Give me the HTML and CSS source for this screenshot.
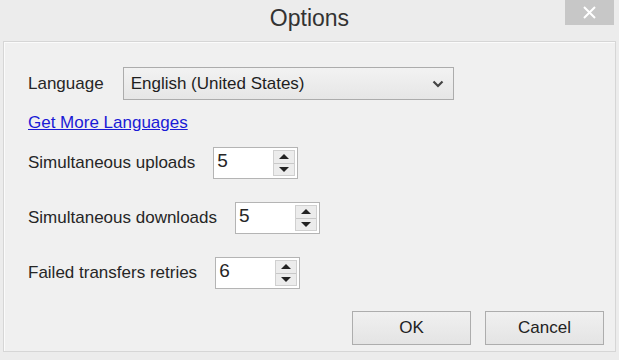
FILE: index.html
```html
<!DOCTYPE html>
<html lang="en">
<head>
    <meta charset="UTF-8">
    <title>Options</title>
    <link rel="stylesheet" href="styles.css">
</head>
<body>
    <div class="dialog">
        <div class="titlebar">
            <span class="title">Options</span>
            <button class="close" aria-label="Close">
                <svg width="15" height="15" viewBox="0 0 15 15"><path d="M2 2 L13 13 M13 2 L2 13" stroke="#fff" stroke-width="2" fill="none"/></svg>
            </button>
        </div>
        <div class="panel">
            <div class="row">
                <label>Language</label>
                <div class="select">
                    <span>English (United States)</span>
                    <svg width="12" height="8" viewBox="0 0 12 8"><path d="M1.5 1.5 L6 6 L10.5 1.5" stroke="#444" stroke-width="2.2" fill="none"/></svg>
                </div>
            </div>
            <a class="link" href="#">Get More Languages</a>
            <div class="row spin-row">
                <label>Simultaneous uploads</label>
                <div class="spin"><span class="val">5</span><span class="arrows"><i class="up"></i><i class="down"></i></span></div>
            </div>
            <div class="row spin-row">
                <label>Simultaneous downloads</label>
                <div class="spin"><span class="val">5</span><span class="arrows"><i class="up"></i><i class="down"></i></span></div>
            </div>
            <div class="row spin-row">
                <label>Failed transfers retries</label>
                <div class="spin"><span class="val">6</span><span class="arrows"><i class="up"></i><i class="down"></i></span></div>
            </div>
            <div class="actions">
                <button class="btn">OK</button>
                <button class="btn">Cancel</button>
            </div>
        </div>
    </div>
</body>
</html>
```
FILE: styles.css
```css
html, body {
    margin: 0;
    padding: 0;
}
body {
    width: 619px;
    height: 360px;
    background-color: #ececec;
    font-family: "Liberation Sans", Arial, sans-serif;
    color: #262626;
    overflow: hidden;
}
.dialog {
    display: flex;
    flex-direction: column;
    height: 360px;
}
.titlebar {
    height: 40px;
    display: flex;
    justify-content: center;
    align-items: center;
    position: relative;
}
.title {
    font-size: 23px;
    color: #333;
    margin-top: -4px;
}
.close {
    position: absolute;
    top: 0;
    right: 5px;
    width: 49px;
    height: 25px;
    border: none;
    background-color: #c7c7c7;
    display: flex;
    justify-content: center;
    align-items: center;
    padding: 0;
}
.panel {
    margin: 1px 3px 8px 3px;
    flex: 1;
    background-color: #f0f0f0;
    border: 1px solid #d6d6d6;
    box-shadow: inset 1px 1px 0 #fbfbfb;
    padding: 25px 0 0 24px;
    display: flex;
    flex-direction: column;
    align-items: flex-start;
    font-size: 17px;
}
.row {
    display: flex;
    align-items: center;
    gap: 19px;
}
.select {
    width: 313px;
    height: 31px;
    border: 1px solid #acacac;
    background: linear-gradient(#f2f2f2, #e6e6e6);
    display: flex;
    align-items: center;
    justify-content: space-between;
    padding: 0 9px 0 7px;
    color: #1e1e1e;
}
.link {
    color: #1a1ad6;
    margin-top: 13px;
    margin-left: 0;
}
.spin-row {
    gap: 18px;
    margin-top: 23px;
}
.link + .spin-row {
    margin-top: 14px;
}
.spin {
    width: 83px;
    height: 30px;
    border: 1px solid #b4b4b4;
    background-color: #fff;
    display: flex;
    justify-content: space-between;
}
.val {
    padding: 2px 0 0 3px;
    font-size: 19px;
}
.arrows {
    width: 20px;
    margin: 2px;
    display: flex;
    flex-direction: column;
    border: 1px solid #d0d0d0;
    background-color: #ececec;
}
.arrows i {
    flex: 1;
    display: flex;
    justify-content: center;
    align-items: center;
}
.arrows .up {
    border-bottom: 1px solid #c8c8c8;
}
.arrows .up::after {
    content: "";
    border-left: 5px solid transparent;
    border-right: 5px solid transparent;
    border-bottom: 5px solid #222;
}
.arrows .down::after {
    content: "";
    border-left: 5px solid transparent;
    border-right: 5px solid transparent;
    border-top: 5px solid #222;
}
.actions {
    align-self: flex-end;
    display: flex;
    gap: 14px;
    margin-top: 22px;
    margin-right: 11px;
}
.btn {
    width: 119px;
    height: 34px;
    border: 1px solid #adadad;
    background: linear-gradient(#f0f0f0, #e4e4e4);
    font-family: "Liberation Sans", Arial, sans-serif;
    font-size: 17px;
    color: #222;
}
```
